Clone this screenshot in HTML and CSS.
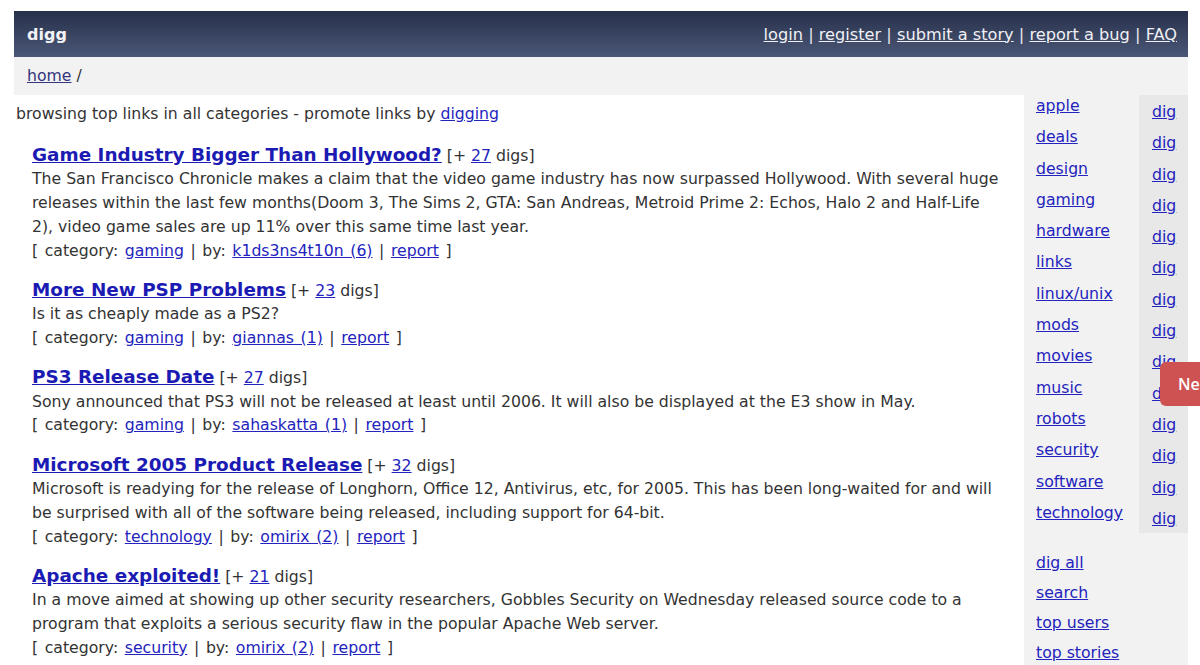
FILE: index.html
```html
<!DOCTYPE html>
<html>
<head>
<meta charset="utf-8">
<title>digg</title>
<link rel="stylesheet" href="styles.css">
</head>
<body>
<div class="page">
  <header class="topbar">
    <div class="logo">digg</div>
    <nav class="toplinks">
      <a href="#">login</a> | <a href="#">register</a> | <a href="#">submit a story</a> | <a href="#">report a bug</a> | <a href="#">FAQ</a>
    </nav>
  </header>
  <div class="crumbs"><a href="#" class="home">home</a> /</div>
  <div class="body">
    <main class="main">
      <p class="intro">browsing top links in all categories - promote links by <a href="#">digging</a></p>

      <div class="story">
        <div class="title"><a href="#">Game Industry Bigger Than Hollywood?</a> [+ <a href="#">27</a> digs]</div>
        <div class="desc">The San Francisco Chronicle makes a claim that the video game industry has now surpassed Hollywood. With several huge releases within the last few months(Doom 3, The Sims 2, GTA: San Andreas, Metroid Prime 2: Echos, Halo 2 and Half-Life 2), video game sales are up 11% over this same time last year.</div>
        <div class="meta">[ category: <a href="#">gaming</a> | by: <a href="#">k1ds3ns4t10n (6)</a> | <a href="#">report</a> ]</div>
      </div>

      <div class="story">
        <div class="title"><a href="#">More New PSP Problems</a> [+ <a href="#">23</a> digs]</div>
        <div class="desc">Is it as cheaply made as a PS2?</div>
        <div class="meta">[ category: <a href="#">gaming</a> | by: <a href="#">giannas (1)</a> | <a href="#">report</a> ]</div>
      </div>

      <div class="story">
        <div class="title"><a href="#">PS3 Release Date</a> [+ <a href="#">27</a> digs]</div>
        <div class="desc">Sony announced that PS3 will not be released at least until 2006. It will also be displayed at the E3 show in May.</div>
        <div class="meta">[ category: <a href="#">gaming</a> | by: <a href="#">sahaskatta (1)</a> | <a href="#">report</a> ]</div>
      </div>

      <div class="story">
        <div class="title"><a href="#">Microsoft 2005 Product Release</a> [+ <a href="#">32</a> digs]</div>
        <div class="desc">Microsoft is readying for the release of Longhorn, Office 12, Antivirus, etc, for 2005. This has been long-waited for and will be surprised with all of the software being released, including support for 64-bit.</div>
        <div class="meta">[ category: <a href="#">technology</a> | by: <a href="#">omirix (2)</a> | <a href="#">report</a> ]</div>
      </div>

      <div class="story">
        <div class="title"><a href="#">Apache exploited!</a> [+ <a href="#">21</a> digs]</div>
        <div class="desc">In a move aimed at showing up other security researchers, Gobbles Security on Wednesday released source code to a program that exploits a serious security flaw in the popular Apache Web server.</div>
        <div class="meta">[ category: <a href="#">security</a> | by: <a href="#">omirix (2)</a> | <a href="#">report</a> ]</div>
      </div>
    </main>

    <aside class="side">
      <div class="cats">
        <div class="cat-names">
          <a href="#">apple</a>
          <a href="#">deals</a>
          <a href="#">design</a>
          <a href="#">gaming</a>
          <a href="#">hardware</a>
          <a href="#">links</a>
          <a href="#">linux/unix</a>
          <a href="#">mods</a>
          <a href="#">movies</a>
          <a href="#">music</a>
          <a href="#">robots</a>
          <a href="#">security</a>
          <a href="#">software</a>
          <a href="#">technology</a>
        </div>
        <div class="cat-digs">
          <a href="#">dig</a>
          <a href="#">dig</a>
          <a href="#">dig</a>
          <a href="#">dig</a>
          <a href="#">dig</a>
          <a href="#">dig</a>
          <a href="#">dig</a>
          <a href="#">dig</a>
          <a href="#">dig</a>
          <a href="#">dig</a>
          <a href="#">dig</a>
          <a href="#">dig</a>
          <a href="#">dig</a>
          <a href="#">dig</a>
        </div>
      </div>
      <div class="side-links">
        <a href="#">dig all</a>
        <a href="#">search</a>
        <a href="#">top users</a>
        <a href="#">top stories</a>
      </div>
    </aside>
  </div>
</div>
<div class="tab">Ne</div>
</body>
</html>
```

FILE: styles.css
```css
html, body {
  margin: 0;
  padding: 0;
  background: #fff;
  overflow: hidden;
}
body {
  font-family: "DejaVu Sans", Verdana, sans-serif;
  font-size: 15.7px;
  color: #333;
}
a {
  color: #2323bd;
}
.page {
  width: 1174px;
  margin: 11px 0 0 14px;
}
.topbar {
  height: 46px;
  display: flex;
  align-items: center;
  justify-content: space-between;
  padding: 0 11px 0 13px;
  background: linear-gradient(#27304b, #4a5776);
  color: #e8e8ee;
  font-size: 16.2px;
}
.logo {
  font-weight: bold;
  font-size: 16px;
  color: #f2f2f6;
}
.toplinks a {
  color: #f0f0f4;
}
.crumbs {
  height: 38px;
  line-height: 38px;
  padding-left: 13px;
  background: #f2f2f2;
  color: #333;
}
.crumbs .home {
  color: #34347c;
}
.body {
  display: flex;
  align-items: stretch;
  min-height: 600px;
}
.main {
  flex: 1;
  padding: 7px 22px 0 2px;
  line-height: 23.7px;
}
.intro {
  margin: 0 0 18px 0;
}
.story {
  padding-left: 16px;
  margin-bottom: 16.4px;
}
.title {
  color: #333;
  height: 23.7px;
}
.title > a:first-child {
  font-weight: bold;
  font-size: 18.4px;
  line-height: 1;
  color: #1b1bb3;
}
.meta {
  word-spacing: 1.6px;
}
.side {
  width: 164px;
  background: #f2f2f2;
}
.cats {
  display: flex;
}
.cat-names {
  flex: 1;
  padding-left: 12px;
}
.cat-names a,
.cat-digs a,
.side-links a {
  display: block;
  line-height: 20px;
  margin-bottom: 11.3px;
  width: max-content;
}
.cat-names {
  padding-top: 1px;
}
.cat-digs {
  width: 36px;
  padding: 7px 0 0 13px;
  background: #e8e8e8;
}
.cat-digs a:last-child {
  margin-bottom: 4px;
}
.cat-names a:last-child {
  margin-bottom: 0;
}
.side-links {
  padding: 20px 0 0 12px;
}
.side-links a {
  margin-bottom: 10px;
}
.tab {
  position: fixed;
  top: 362px;
  right: 0;
  width: 22px;
  height: 44px;
  line-height: 44px;
  padding-left: 18px;
  white-space: nowrap;
  overflow: hidden;
  background: #cf5252;
  color: #fff;
  font-family: "Open Sans", "DejaVu Sans", sans-serif;
  font-size: 16px;
  font-weight: 600;
  border-radius: 6px 0 0 6px;
}
```
